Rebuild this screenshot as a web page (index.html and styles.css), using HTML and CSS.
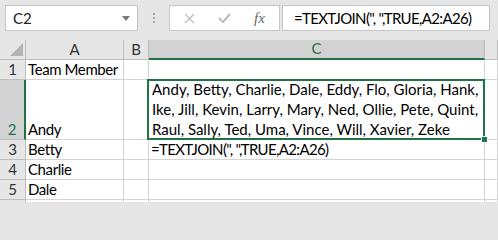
FILE: index.html
```html
<!DOCTYPE html>
<html>
<head>
<meta charset="utf-8">
<link rel="stylesheet" href="styles.css">
</head>
<body>
<div class="toolbar">
  <div class="namebox">
    <span class="nb-text">C2</span>
    <svg class="nb-arrow" width="8" height="5" viewBox="0 0 8 5"><path d="M0 0H8L4 5Z" fill="#7a7a7a"/></svg>
  </div>
  <div class="sep"><i></i><i></i><i></i></div>
  <div class="btnbox">
    <svg class="ico-x" width="11" height="11" viewBox="0 0 11 11"><path d="M1 1L10 10M10 1L1 10" stroke="#bcbcbc" stroke-width="1.3" fill="none"/></svg>
    <svg class="ico-check" width="13" height="10" viewBox="0 0 13 10"><path d="M1 5L5 9L12 1" stroke="#bcbcbc" stroke-width="2" fill="none"/></svg>
    <span class="fx">fx</span>
  </div>
  <div class="fbox formula">=TEXTJOIN(", ",TRUE,A2:A26)</div>
</div>
<div class="sheet">
  <div class="hdr corner"><svg width="15" height="15" viewBox="0 0 15 15"><path d="M14 1V14H1Z" fill="#b4b4b4"/></svg></div>
  <div class="hdr colh">A</div>
  <div class="hdr colh">B</div>
  <div class="hdr colh sel-col">C</div>
  <div class="hdr colh"></div>

  <div class="hdr rowh">1</div>
  <div class="cell name">Team Member</div>
  <div class="cell"></div>
  <div class="cell"></div>
  <div class="cell"></div>

  <div class="hdr rowh sel-row">2</div>
  <div class="cell name">Andy</div>
  <div class="cell"></div>
  <div class="cell active"><div class="wrap">Andy, Betty, Charlie, Dale, Eddy, Flo, Gloria, Hank,<br>Ike, Jill, Kevin, Larry, Mary, Ned, Ollie, Pete, Quint,<br>Raul, Sally, Ted, Uma, Vince, Will, Xavier, Zeke</div><span class="handle"></span></div>
  <div class="cell"></div>

  <div class="hdr rowh">3</div>
  <div class="cell name">Betty</div>
  <div class="cell"></div>
  <div class="cell formula">=TEXTJOIN(", ",TRUE,A2:A26)</div>
  <div class="cell"></div>

  <div class="hdr rowh">4</div>
  <div class="cell name">Charlie</div>
  <div class="cell"></div>
  <div class="cell"></div>
  <div class="cell"></div>

  <div class="hdr rowh">5</div>
  <div class="cell name">Dale</div>
  <div class="cell"></div>
  <div class="cell"></div>
  <div class="cell"></div>

  <div class="hdr rowh">6</div>
  <div class="cell"></div>
  <div class="cell"></div>
  <div class="cell"></div>
  <div class="cell"></div>
</div>
</body>
</html>
```

FILE: styles.css
```css
* { box-sizing: border-box; }
html, body { margin: 0; padding: 0; }
html { height: 202px; overflow: hidden; }
body {
  width: 498px;
  height: 202px;
  overflow: hidden;
  background: #e6e6e6;
  font-family: Lato, "Liberation Sans", sans-serif;
  font-size: 15px;
  color: #000;
}
.toolbar {
  display: flex;
  align-items: flex-start;
  height: 40px;
  padding: 5px 0 0 5px;
}
.namebox {
  width: 133px;
  height: 26px;
  background: #fff;
  border: 1px solid #c6c6c6;
  display: flex;
  align-items: center;
  justify-content: space-between;
  padding: 0 7px 0 7px;
}
.nb-text { font-size: 15px; color: #222; }
.sep {
  width: 31px;
  height: 26px;
  display: flex;
  flex-direction: column;
  align-items: center;
  justify-content: center;
  gap: 2px;
}
.sep i {
  display: block;
  width: 2px;
  height: 2px;
  background: #a8a8a8;
}
.btnbox {
  width: 111px;
  height: 26px;
  background: #fff;
  border: 1px solid #c6c6c6;
  display: flex;
  align-items: center;
  padding-left: 14px;
}
.ico-x { margin-right: 23px; }
.ico-check { margin-right: 23px; }
.fx {
  font-family: "Liberation Serif", serif;
  font-style: italic;
  font-size: 15px;
  color: #666;
}
.fbox {
  margin-left: 2px;
  width: 208px;
  height: 26px;
  background: #fff;
  border: 1px solid #c6c6c6;
  padding-left: 11px;
  line-height: 24px;
  white-space: nowrap;
}
.formula { letter-spacing: -0.65px; }
.name { letter-spacing: -0.4px; }
.sheet {
  display: grid;
  grid-template-columns: 26px 98px 25px 336px 1fr;
  grid-template-rows: 20px 20px 60px 20px 20px 20px 20px;
  background: #fff;
}
.hdr {
  background: #e6e6e6;
  border-right: 1px solid #bdbdbd;
  border-bottom: 1px solid #bdbdbd;
  color: #333;
  display: flex;
  justify-content: center;
  align-items: flex-end;
  padding-bottom: 1px;
  line-height: 18px;
}
.corner { align-items: flex-end; justify-content: flex-end; padding: 0 1px 2px 0; }
.corner svg { display: block; }
.sel-col {
  background: #d2d2d2;
  color: #217346;
  border-bottom: 2px solid #217346;
}
.sel-row {
  background: #d2d2d2;
  color: #217346;
  border-right: 2px solid #217346;
}
.cell {
  border-right: 1px solid #d4d4d4;
  border-bottom: 1px solid #d4d4d4;
  display: flex;
  align-items: flex-end;
  padding: 0 2px 1px 2px;
  line-height: 18px;
  white-space: nowrap;
}
.active {
  position: relative;
  padding-bottom: 0;
}
.active .wrap { line-height: 20px; padding-left: 1px; }
.active::after {
  content: "";
  position: absolute;
  top: -1px;
  left: -2px;
  right: -1px;
  bottom: -1px;
  border: 2px solid #217346;
  pointer-events: none;
}
.handle {
  position: absolute;
  right: -4px;
  bottom: -4px;
  width: 7px;
  height: 7px;
  background: #217346;
  border: 1px solid #fff;
  z-index: 2;
}
```
